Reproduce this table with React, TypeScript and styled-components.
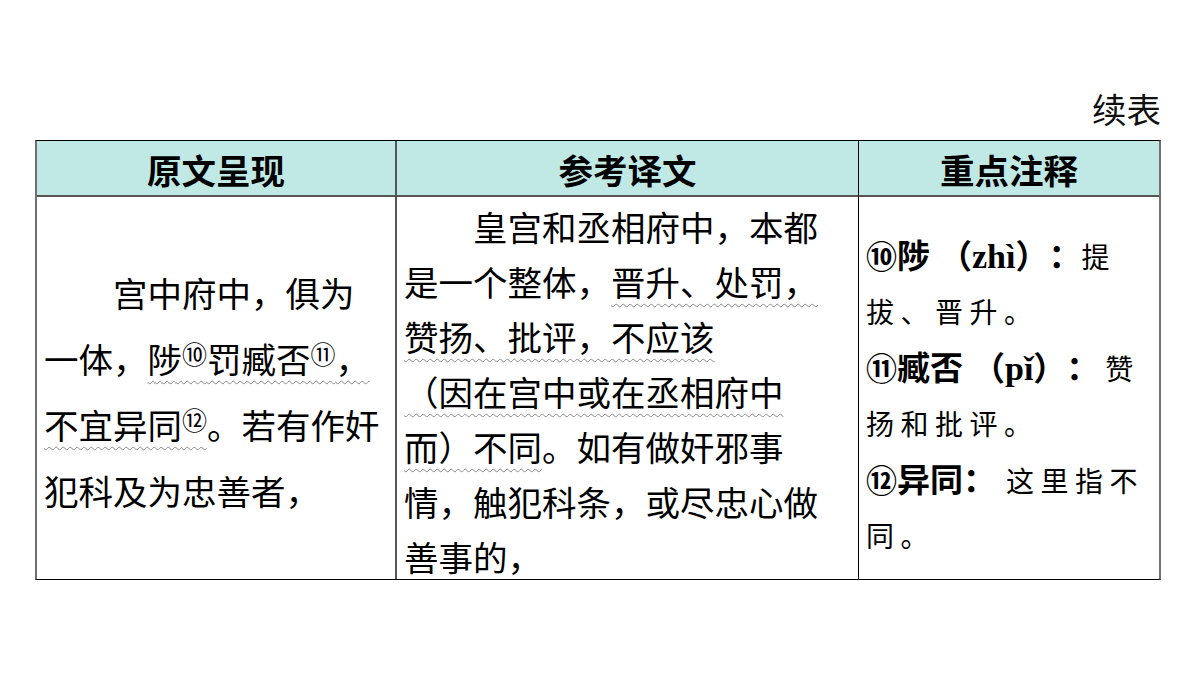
import React from "react";
import styled, { createGlobalStyle } from "styled-components";

const GlobalStyle = createGlobalStyle`
  html, body { margin: 0; padding: 0; background: #ffffff; }
  body {
    font-family: "Noto Sans CJK SC", "Noto Sans", sans-serif;
    color: #000;
    text-spacing-trim: space-all;
  }
`;

const Page = styled.div`
  width: 1200px;
  height: 675px;
  box-sizing: border-box;
  padding: 86px 39px 0 35px;
  display: flex;
  flex-direction: column;
`;

const Caption = styled.div`
  align-self: flex-end;
  font-size: 34.5px;
  line-height: 44px;
  height: 44px;
  margin-bottom: 10px;
  color: #111;
`;

const Table = styled.div`
  width: 1126px;
  box-sizing: border-box;
  display: grid;
  grid-template-columns: 360px 462px 1fr;
  grid-template-rows: 56px 382px;
  border-top: 1px solid #000;
  border-bottom: 1px solid #000;
  border-left: 2px solid #707070;
  border-right: 2px solid #707070;
`;

const HeadCell = styled.div<{ $divider?: "gray" | "black" }>`
  background: #c0e9e6;
  box-sizing: border-box;
  border-bottom: 2px solid #555;
  border-right: ${(p) =>
    p.$divider === "gray" ? "2px solid #555" : p.$divider === "black" ? "1px solid #000" : "none"};
  display: flex;
  align-items: center;
  justify-content: center;
  font-size: 34.5px;
  font-weight: 700;
  padding-top: 2px;
`;

const BodyCell = styled.div<{ $divider?: "gray" | "black" }>`
  box-sizing: border-box;
  border-right: ${(p) =>
    p.$divider === "gray" ? "2px solid #555" : p.$divider === "black" ? "1px solid #000" : "none"};
  display: flex;
  flex-direction: column;
`;

const SourceText = styled.div`
  padding: 62px 4px 0 7px;
  font-size: 34.5px;
  line-height: 66px;
  white-space: nowrap;
`;

const TransText = styled.div`
  padding: 2px 4px 0 7px;
  font-size: 34.5px;
  line-height: 55px;
  white-space: nowrap;
`;

const NotesText = styled.div`
  padding: 30px 10px 0 7px;
  font-size: 28px;
  line-height: 55px;
  white-space: nowrap;
`;

const Line = styled.div<{ $indent?: boolean }>`
  display: block;
  text-indent: ${(p) => (p.$indent ? "2em" : "0")};
`;

const NoteLine = styled.div`
  display: block;
`;

const Wavy = styled.span`
  text-decoration-line: underline;
  text-decoration-style: wavy;
  text-decoration-color: #8c8c8c;
  text-decoration-thickness: 1px;
  text-underline-offset: 7px;
`;

const Sup = styled.span`
  font-family: "Noto Sans CJK SC", serif;
  font-size: 25px;
  vertical-align: 9px;
  line-height: 0;
`;

const Term = styled.span`
  font-weight: 700;
  font-size: 33px;
`;

const Circled = styled.span`
  font-family: "Noto Sans CJK SC", serif;
  font-weight: 700;
  font-size: 31px;
`;

const Pinyin = styled.span`
  font-family: "Liberation Serif", "Noto Sans CJK SC", serif;
  font-weight: 700;
  font-size: 34px;
`;

const Paren = styled.span<{ $open?: boolean }>`
  font-family: "Noto Sans CJK SC", sans-serif;
  font-weight: 700;
  font-size: 33px;
  margin-left: ${(p) => (p.$open ? "9px" : "0")};
`;

const Colon = styled.span<{ $gap?: number }>`
  font-weight: 700;
  font-size: 33px;
  margin-right: ${(p) => p.$gap ?? 0}px;
`;

const Gloss = styled.span`
  font-family: "AR PL UKai CN", "KaiTi", "STKaiti", "Noto Sans CJK SC", sans-serif;
  font-size: 28px;
  letter-spacing: 6.5px;
`;

export default function App() {
  return (
    <>
      <GlobalStyle />
      <Page>
        <Caption>续表</Caption>
        <Table>
          <HeadCell $divider="gray">原文呈现</HeadCell>
          <HeadCell $divider="black">参考译文</HeadCell>
          <HeadCell>重点注释</HeadCell>

          <BodyCell $divider="gray">
            <SourceText>
              <Line $indent>宫中府中，俱为</Line>
              <Line>
                一体，<Wavy>陟<Sup>⑩</Sup>罚臧否<Sup>⑪</Sup>，</Wavy>
              </Line>
              <Line>
                <Wavy>不宜异同<Sup>⑫</Sup></Wavy>。若有作奸
              </Line>
              <Line>犯科及为忠善者，</Line>
            </SourceText>
          </BodyCell>

          <BodyCell $divider="black">
            <TransText>
              <Line $indent>皇宫和丞相府中，本都</Line>
              <Line>
                是一个整体，<Wavy>晋升、处罚，</Wavy>
              </Line>
              <Line>
                <Wavy>赞扬、批评，不应该</Wavy>
              </Line>
              <Line>
                <Wavy>（因在宫中或在丞相府中</Wavy>
              </Line>
              <Line>
                <Wavy>而）不同</Wavy>。如有做奸邪事
              </Line>
              <Line>情，触犯科条，或尽忠心做</Line>
              <Line>善事的，</Line>
            </TransText>
          </BodyCell>

          <BodyCell>
            <NotesText>
              <NoteLine>
                <Circled>⑩</Circled>
                <Term>陟</Term>
                <Paren $open>（</Paren>
                <Pinyin>zhì</Pinyin>
                <Paren>）</Paren>
                <Colon $gap={0}>：</Colon>
                <Gloss>提</Gloss>
              </NoteLine>
              <NoteLine>
                <Gloss>拔、晋升。</Gloss>
              </NoteLine>
              <NoteLine>
                <Circled>⑪</Circled>
                <Term>臧否</Term>
                <Paren $open>（</Paren>
                <Pinyin>pǐ</Pinyin>
                <Paren>）</Paren>
                <Colon $gap={6}>：</Colon>
                <Gloss>赞</Gloss>
              </NoteLine>
              <NoteLine>
                <Gloss>扬和批评。</Gloss>
              </NoteLine>
              <NoteLine>
                <Circled>⑫</Circled>
                <Term>异同</Term>
                <Colon $gap={10}>：</Colon>
                <Gloss>这里指不</Gloss>
              </NoteLine>
              <NoteLine>
                <Gloss>同。</Gloss>
              </NoteLine>
            </NotesText>
          </BodyCell>
        </Table>
      </Page>
    </>
  );
}
